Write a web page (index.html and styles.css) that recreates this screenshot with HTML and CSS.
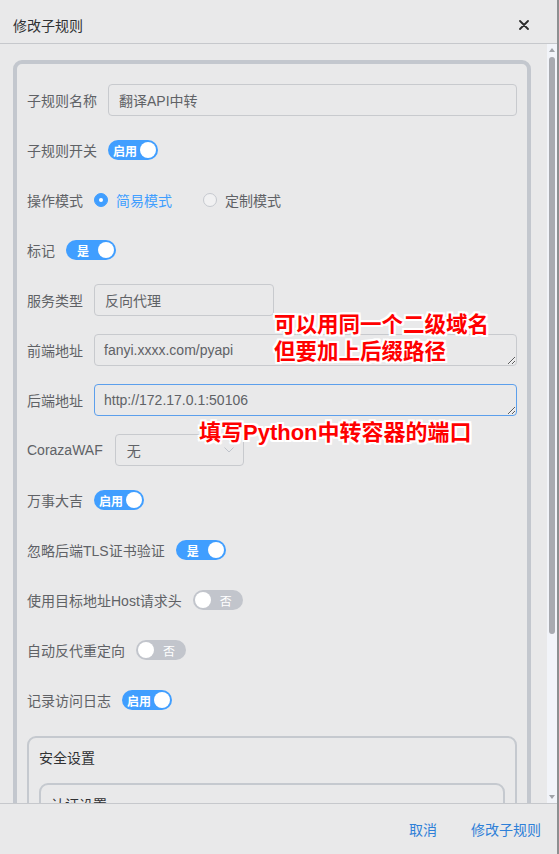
FILE: index.html
```html
<!DOCTYPE html>
<html>
<head>
    <title>修改子规则</title>
    <link rel="stylesheet" href="styles.css">
</head>
<body>
    <div class="dialog">
        <div class="dialog-header">
            <span class="dialog-title">修改子规则</span>
            <svg class="close-icon" width="10" height="10" viewBox="0 0 10 10">
                <path d="M1 1L9 9M9 1L1 9" stroke="#2b2b2b" stroke-width="1.8" stroke-linecap="round"/>
            </svg>
        </div>

        <div class="dialog-main">
            <div class="dialog-body">
                <div class="rule-card">
                    <div class="form-row">
                        <span class="form-label">子规则名称</span>
                        <input class="text-input grow" type="text" value="翻译API中转">
                    </div>

                    <div class="form-row">
                        <span class="form-label">子规则开关</span>
                        <span class="switch on"><span class="switch-text">启用</span><span class="switch-knob"></span></span>
                    </div>

                    <div class="form-row">
                        <span class="form-label">操作模式</span>
                        <span class="radio checked"><span class="radio-dot"></span>简易模式</span>
                        <span class="radio"><span class="radio-dot"></span>定制模式</span>
                    </div>

                    <div class="form-row">
                        <span class="form-label">标记</span>
                        <span class="switch on"><span class="switch-text">是</span><span class="switch-knob"></span></span>
                    </div>

                    <div class="form-row">
                        <span class="form-label">服务类型</span>
                        <input class="text-input short" type="text" value="反向代理">
                    </div>

                    <div class="form-row">
                        <span class="form-label">前端地址</span>
                        <textarea class="text-input grow area" rows="1">fanyi.xxxx.com/pyapi</textarea>
                    </div>

                    <div class="form-row">
                        <span class="form-label">后端地址</span>
                        <textarea class="text-input grow area focused" rows="1">http://172.17.0.1:50106</textarea>
                    </div>

                    <div class="form-row">
                        <span class="form-label">CorazaWAF</span>
                        <div class="select-box">
                            <span>无</span>
                            <svg width="10" height="6" viewBox="0 0 10 6">
                                <path d="M0.5 0.5L5 5L9.5 0.5" fill="none" stroke="#c0c4cc" stroke-width="1"/>
                            </svg>
                        </div>
                    </div>

                    <div class="form-row">
                        <span class="form-label">万事大吉</span>
                        <span class="switch on"><span class="switch-text">启用</span><span class="switch-knob"></span></span>
                    </div>

                    <div class="form-row">
                        <span class="form-label">忽略后端TLS证书验证</span>
                        <span class="switch on"><span class="switch-text">是</span><span class="switch-knob"></span></span>
                    </div>

                    <div class="form-row">
                        <span class="form-label">使用目标地址Host请求头</span>
                        <span class="switch off"><span class="switch-knob"></span><span class="switch-text">否</span></span>
                    </div>

                    <div class="form-row">
                        <span class="form-label">自动反代重定向</span>
                        <span class="switch off"><span class="switch-knob"></span><span class="switch-text">否</span></span>
                    </div>

                    <div class="form-row">
                        <span class="form-label">记录访问日志</span>
                        <span class="switch on"><span class="switch-text">启用</span><span class="switch-knob"></span></span>
                    </div>

                    <div class="section">
                        <div class="section-title">安全设置</div>
                        <div class="section inner">
                            <div class="section-title">认证设置</div>
                        </div>
                    </div>

                    <!-- annotations drawn on the screenshot -->
                    <div class="note note-front">可以用同一个二级域名<br>但要加上后缀路径</div>
                    <div class="note note-back">填写Python中转容器的端口</div>
                </div>
            </div>

            <div class="scrollbar">
                <span class="scroll-arrow up"></span>
                <span class="scroll-thumb"></span>
                <span class="scroll-rest"></span>
                <span class="scroll-arrow down"></span>
            </div>
        </div>

        <div class="dialog-footer">
            <button class="text-btn">取消</button>
            <button class="text-btn">修改子规则</button>
        </div>
    </div>
</body>
</html>
```

FILE: styles.css
```css
* {
    margin: 0;
    padding: 0;
    box-sizing: border-box;
}

html, body {
    width: 100%;
    height: 100%;
    overflow: hidden;
}

body {
    background-color: #e9e9ea;
    font-family: "Liberation Sans", "Noto Sans CJK SC", sans-serif;
    font-size: 14px;
    color: #606266;
}

.dialog {
    width: 559px;
    height: 854px;
    border-right: 2px solid #8e8f91;
    display: flex;
    flex-direction: column;
}

.dialog-header {
    height: 44px;
    padding: 6px 28px 0 13px;
    border-bottom: 1px solid #c6c8cc;
    display: flex;
    align-items: center;
    justify-content: space-between;
}

.dialog-title {
    color: #303133;
}

.dialog-main {
    flex: 1;
    min-height: 0;
    display: flex;
}

.dialog-body {
    flex: 1;
    overflow: hidden;
    padding: 16px 16px 16px 13px;
}

/* fake scrollbar, as in the screenshot */
.scrollbar {
    width: 10px;
    background-color: #f2f4f9;
    display: flex;
    flex-direction: column;
    align-items: center;
}

.scroll-arrow {
    height: 12px;
    width: 10px;
    flex-shrink: 0;
    display: flex;
    justify-content: center;
    align-items: center;
}

.scroll-arrow::after {
    content: "";
    border-left: 3px solid transparent;
    border-right: 3px solid transparent;
}

.scroll-arrow.up::after {
    border-bottom: 4px solid #a0a3a8;
}

.scroll-arrow.down::after {
    border-top: 4px solid #a0a3a8;
}

.scroll-thumb {
    width: 6px;
    height: 577px;
    margin-top: 1px;
    border-radius: 3px;
    background-color: #a8aab0;
}

.scroll-rest {
    flex: 1;
}

.rule-card {
    position: relative;
    border: 4px solid #c3c7ce;
    border-radius: 9px;
    padding: 20px 10px 20px 10px;
}

.form-row {
    height: 32px;
    margin-bottom: 18px;
    display: flex;
    align-items: center;
}

.form-label {
    margin-right: 11px;
    white-space: nowrap;
}

.text-input {
    height: 32px;
    padding: 0 10px;
    border: 1px solid #c8cace;
    border-radius: 4px;
    background-color: transparent;
    font-family: inherit;
    font-size: 14px;
    color: #606266;
    outline: none;
}

.grow {
    flex: 1;
}

.short {
    width: 180px;
}

.area {
    padding: 7px 9px;
    line-height: 17px;
    overflow: hidden;
}

.focused {
    border-color: #5c9fec;
}

.select-box {
    width: 129px;
    height: 32px;
    margin-left: 1px;
    padding: 0 9px 0 11px;
    border: 1px solid #c8cace;
    border-radius: 4px;
    display: flex;
    align-items: center;
    justify-content: space-between;
}

.switch {
    width: 50px;
    height: 20px;
    padding: 2px;
    border-radius: 10px;
    display: inline-flex;
    align-items: center;
    color: #ffffff;
    font-size: 12px;
    font-weight: bold;
}

.switch.on {
    background-color: #409eff;
}

.switch.off {
    background-color: #c2c5cc;
    font-weight: normal;
}

.switch-text {
    flex: 1;
    text-align: center;
}

.switch-knob {
    width: 16px;
    height: 16px;
    border-radius: 50%;
    background-color: #ffffff;
}

.radio {
    display: inline-flex;
    align-items: center;
    margin-right: 31px;
}

.radio-dot {
    width: 14px;
    height: 14px;
    margin-right: 8px;
    border: 1px solid #c6c9cf;
    border-radius: 50%;
    background-color: #f1f1f2;
    display: flex;
    justify-content: center;
    align-items: center;
}

.radio.checked {
    color: #409eff;
}

.radio.checked .radio-dot {
    border-color: #409eff;
    background-color: #409eff;
}

.radio.checked .radio-dot::after {
    content: "";
    width: 4px;
    height: 4px;
    border-radius: 50%;
    background-color: #ffffff;
}

.section {
    margin-top: 20px;
    border: 2px solid #c5c9cf;
    border-radius: 9px;
    padding: 10px 10px 10px 10px;
}

.section-title {
    height: 20px;
    line-height: 20px;
    color: #303133;
}

.section.inner {
    margin-top: 15px;
    height: 176px;
}

.note {
    position: absolute;
    color: #ff0000;
    font-size: 21px;
    font-weight: bold;
    line-height: 27px;
    white-space: nowrap;
    text-shadow:
        -2px -2px 0 #fff, 0 -2px 0 #fff, 2px -2px 0 #fff,
        -2px 0 0 #fff, 2px 0 0 #fff,
        -2px 2px 0 #fff, 0 2px 0 #fff, 2px 2px 0 #fff;
}

.note-front {
    left: 257px;
    top: 248px;
    font-size: 21.5px;
}

.note-back {
    left: 182px;
    top: 355px;
    font-size: 22px;
}

.dialog-footer {
    height: 51px;
    padding-right: 16px;
    border-top: 1px solid #c6c8cc;
    display: flex;
    align-items: center;
    justify-content: flex-end;
    gap: 34px;
}

.text-btn {
    border: none;
    background: none;
    font-family: inherit;
    font-size: 14px;
    color: #2e80d8;
    cursor: pointer;
}
```
